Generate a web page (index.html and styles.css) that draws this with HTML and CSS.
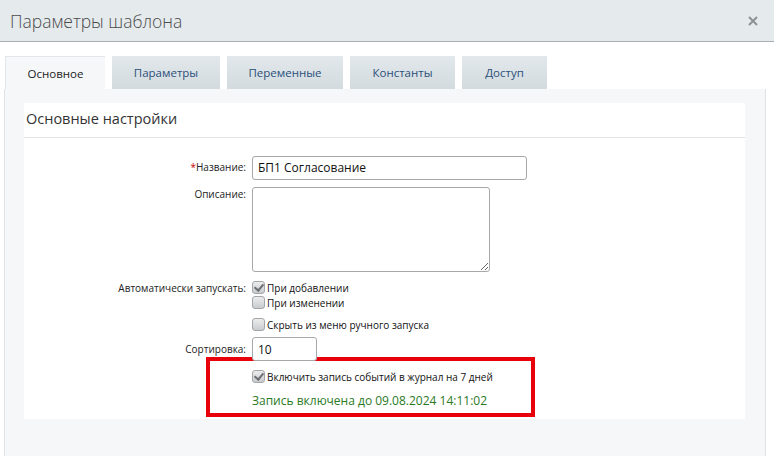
FILE: index.html
```html
<!DOCTYPE html>
<html lang="ru">
<head>
  <meta charset="UTF-8" />
  <title>Параметры шаблона</title>
  <link rel="stylesheet" href="styles.css">
</head>
<body>
  <header class="dlg-head">
    <h1>Параметры шаблона</h1>
    <button class="dlg-close" title="Закрыть">
      <svg width="10" height="10" viewBox="0 0 10 10"><path d="M1 1L9 9M9 1L1 9" stroke="#8d9295" stroke-width="2"/></svg>
    </button>
  </header>

  <nav class="tabs">
    <span class="tab active" style="width:100px">Основное</span>
    <span class="tab" style="width:108px">Параметры</span>
    <span class="tab" style="width:116px">Переменные</span>
    <span class="tab" style="width:105px">Константы</span>
    <span class="tab" style="width:85px">Доступ</span>
  </nav>

  <main class="panel">
    <section class="box">
      <h2>Основные настройки</h2>
      <div class="form">
        <label class="lbl lbl-input"><span class="req">*</span>Название:</label>
        <div><input class="txt name" type="text" value="БП1 Согласование"></div>

        <label class="lbl lbl-area">Описание:</label>
        <div><textarea class="area"></textarea></div>

        <label class="lbl lbl-check">Автоматически запускать:</label>
        <div class="checks">
          <div class="chk"><span class="cb on"></span>При добавлении</div>
          <div class="chk"><span class="cb"></span>При изменении</div>
        </div>

        <span></span>
        <div class="checks hide"><div class="chk"><span class="cb"></span>Скрыть из меню ручного запуска</div></div>

        <label class="lbl lbl-input">Сортировка:</label>
        <div><input class="txt sort" type="text" value="10"></div>
      </div>

      <div class="log">
        <div class="chk"><span class="cb on"></span>Включить запись событий в журнал на 7 дней</div>
        <div class="log-status">Запись включена до 09.08.2024 14:11:02</div>
      </div>
    </section>
  </main>
</body>
</html>
```

FILE: styles.css
```css
* {
  box-sizing: border-box;
}
body {
  margin: 0;
  background: #fff;
  font-family: "Open Sans", "Noto Sans", sans-serif;
  color: #000;
  height: 456px;
  overflow: hidden;
}
.dlg-head {
  display: flex;
  align-items: center;
  justify-content: space-between;
  height: 42px;
  padding: 0 16px 0 10px;
  background: #e5eaed;
  border-bottom: 1px solid #a9aeb1;
}
.dlg-head h1 {
  margin: 0;
  font-size: 17.5px;
  font-weight: 300;
  color: #4b4b4b;
}
.dlg-close {
  border: none;
  background: none;
  padding: 0;
  display: flex;
}
.tabs {
  display: flex;
  gap: 7px;
  padding: 14px 0 0 5px;
}
.tab {
  height: 33px;
  display: flex;
  align-items: center;
  justify-content: center;
  font-size: 11.5px;
  color: #2b4f7a;
  background: linear-gradient(#e2e8eb, #d3dbdf);
}
.tab.active {
  color: #222;
  background: #f5f7f8;
  border-top: 1px solid #e2e6e8;
  border-left: 1px solid #e2e6e8;
}
.panel {
  margin: 0 8px 0 4px;
  height: 367px;
  padding: 14px 20px 0 19px;
  background: #f5f7f8;
  border-left: 1px solid #dfe3e5;
  border-right: 1px solid #dfe3e5;
}
.box {
  background: #fff;
  padding-bottom: 2px;
}
.box h2 {
  margin: 0;
  height: 35px;
  padding: 6px 0 0 2px;
  font-size: 14.5px;
  font-weight: 400;
  color: #333;
  border-bottom: 1px solid #dfe3e6;
}
.form {
  display: grid;
  grid-template-columns: 222px 1fr;
  column-gap: 6px;
  padding-top: 17px;
}
.lbl {
  text-align: right;
  font-size: 10px;
  color: #222;
}
.lbl-input {
  padding-top: 5px;
}
.lbl-area {
  padding-top: 0;
}
.lbl-check {
  padding-top: 0;
}
.req {
  color: #c00;
}
.txt {
  height: 24px;
  border: 1px solid #a5a9ac;
  border-radius: 3px;
  padding: 0 5px;
  font-family: inherit;
  font-size: 12px;
  font-weight: 400;
  color: #111;
}
.name {
  width: 275px;
  margin-bottom: 7px;
}
.area {
  display: block;
  width: 238px;
  height: 85px;
  border: 1px solid #a5a9ac;
  border-radius: 3px;
  margin-bottom: 9px;
}
.sort {
  width: 65px;
  height: 24px;
}
.checks {
  margin-bottom: 7px;
}
.hide {
  margin-bottom: 4px;
}
.chk {
  display: flex;
  align-items: center;
  height: 14px;
  margin-bottom: 1px;
  font-size: 10px;
  color: #111;
}
.cb {
  width: 13px;
  height: 13px;
  margin-right: 2px;
  border: 1px solid #a3a7aa;
  border-radius: 3px;
  background: linear-gradient(#ececec, #c8cbce);
  position: relative;
}
.cb.on::after {
  content: "";
  position: absolute;
  left: 3px;
  top: 0;
  width: 4px;
  height: 7px;
  border-right: 2px solid #6c7074;
  border-bottom: 2px solid #6c7074;
  transform: rotate(40deg);
}
.log {
  margin: -4px 0 0 182px;
  width: 329px;
  height: 60px;
  border: 4px solid #e8000b;
  padding: 8px 0 0 42px;
}
.log .chk {
  height: 15px;
}
.log-status {
  margin-top: 8px;
  font-size: 12px;
  color: #2b7a1f;
}
```
